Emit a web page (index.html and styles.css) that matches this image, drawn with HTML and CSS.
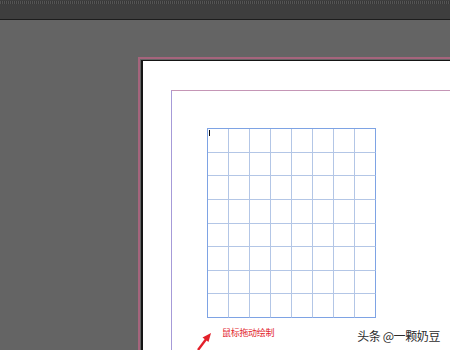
FILE: index.html
```html
<!DOCTYPE html>
<html>
<head>
<meta charset="utf-8">
<link rel="stylesheet" href="styles.css">
</head>
<body>
<div class="app">
  <div class="topbar"><div class="dots"></div></div>
  <div class="canvas">
    <div class="bleed">
      <div class="page">
        <div class="margins">
          <div class="grid">
            <span class="caret"></span>
            <div class="c"></div><div class="c"></div><div class="c"></div><div class="c"></div><div class="c"></div><div class="c"></div><div class="c"></div><div class="c"></div>
            <div class="c"></div><div class="c"></div><div class="c"></div><div class="c"></div><div class="c"></div><div class="c"></div><div class="c"></div><div class="c"></div>
            <div class="c"></div><div class="c"></div><div class="c"></div><div class="c"></div><div class="c"></div><div class="c"></div><div class="c"></div><div class="c"></div>
            <div class="c"></div><div class="c"></div><div class="c"></div><div class="c"></div><div class="c"></div><div class="c"></div><div class="c"></div><div class="c"></div>
            <div class="c"></div><div class="c"></div><div class="c"></div><div class="c"></div><div class="c"></div><div class="c"></div><div class="c"></div><div class="c"></div>
            <div class="c"></div><div class="c"></div><div class="c"></div><div class="c"></div><div class="c"></div><div class="c"></div><div class="c"></div><div class="c"></div>
            <div class="c"></div><div class="c"></div><div class="c"></div><div class="c"></div><div class="c"></div><div class="c"></div><div class="c"></div><div class="c"></div>
            <div class="c"></div><div class="c"></div><div class="c"></div><div class="c"></div><div class="c"></div><div class="c"></div><div class="c"></div><div class="c"></div>
          </div>
          <div class="caption">
            <svg class="arrow" width="20" height="20" viewBox="0 0 20 20">
              <path d="M2 19 L11 7" stroke="#e3202a" stroke-width="2.4" fill="none"/>
              <path d="M15 2 L6.5 6.5 L12.5 11 Z" fill="#e3202a"/>
            </svg>
            <span class="note">鼠标拖动绘制</span>
          </div>
        </div>
      </div>
    </div>
  </div>
  <div class="watermark">头条 @一颗奶豆</div>
</div>
</body>
</html>
```
FILE: styles.css
```css
html, body {
  margin: 0;
  padding: 0;
}
body {
  width: 450px;
  height: 350px;
  overflow: hidden;
  background: #646464;
  font-family: "Noto Sans CJK SC", "Noto Sans", sans-serif;
}
.app {
  position: relative;
  width: 450px;
  height: 350px;
  overflow: hidden;
  display: flex;
  flex-direction: column;
}
.topbar {
  height: 19px;
  background: #3e3e3e;
  border-bottom: 1px solid #1d1d1d;
  flex: none;
}
.dots {
  height: 3px;
  margin-top: 1px;
  background: repeating-linear-gradient(90deg, #5a5a5a 0 1px, #343434 1px 2px);
  opacity: 0.8;
}
.canvas {
  flex: 1;
  display: flex;
  padding: 37px 0 0 138px;
  background: #646464;
}
.bleed {
  flex: 1;
  display: flex;
  border-top: 2px solid #a5647c;
  border-left: 2px solid #a5647c;
  padding: 1px 0 0 1px;
}
.page {
  flex: 1;
  background: #ffffff;
  border-top: 1px solid #151515;
  border-left: 2px solid #151515;
  padding: 29px 0 0 28px;
}
.margins {
  width: 247px;
  height: 300px;
  border-top: 1px solid #c596b6;
  border-left: 1px solid #a69bd8;
  border-right: 1px solid #a69bd8;
  padding: 37px 0 0 35px;
}
.grid {
  position: relative;
  width: 168px;
  height: 189px;
  border-top: 1px solid #7ea3e4;
  border-left: 1px solid #7ea3e4;
  display: grid;
  grid-template-columns: repeat(8, 21px);
  grid-template-rows: repeat(8, 1fr);
}
.c {
  border-right: 1px solid #b3c6e6;
  border-bottom: 1px solid #b3c6e6;
}
.c:nth-child(8n+1) {
  border-right-color: #7ea3e4;
}
.c:nth-last-child(-n+8) {
  border-bottom-color: #7ea3e4;
}
.caret {
  position: absolute;
  left: 1px;
  top: 1px;
  width: 1px;
  height: 6px;
  background: #111;
}
.caption {
  position: relative;
  padding: 0 0 0 15px;
  margin-top: -1px;
}
.note {
  font-size: 9px;
  line-height: 12px;
  color: #e2262e;
  letter-spacing: -0.3px;
}
.arrow {
  position: absolute;
  left: -11px;
  top: 14px;
}
.watermark {
  position: absolute;
  right: 10px;
  bottom: 7px;
  font-size: 12px;
  line-height: 14px;
  color: #2c2c2c;
  letter-spacing: -0.4px;
  text-shadow: 0 0 2px #ffffff, 0 0 2px #ffffff;
}
```
